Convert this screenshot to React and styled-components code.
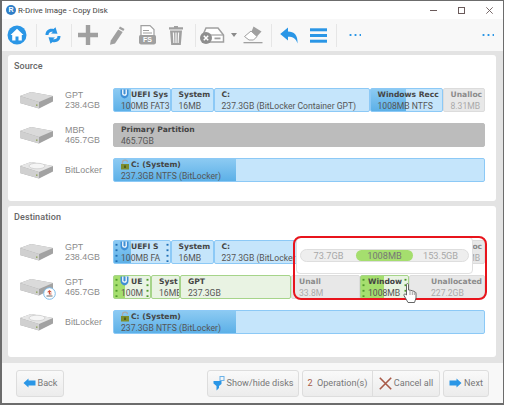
import React from "react";
import styled, { createGlobalStyle } from "styled-components";

const GlobalStyle = createGlobalStyle`
  html, body {
    margin: 0;
    padding: 0;
    background: #fff;
    font-family: Roboto, "Liberation Sans", sans-serif;
  }
`;

const BLUE = "#2a96e6";
const GREY = "#a0a0a0";

// icons
const HomeIcon = () => (
  <svg width="20" height="20" viewBox="0 0 20 20">
    <circle cx="10" cy="10" r="9.500" fill={BLUE} />
    <path d="M10 3.800 L16.500 10 H14.800 V15.500 H11.500 V11.500 H8.500 V15.500 H5.200 V10 H3.500 Z" fill="#fff" />
  </svg>
);

const RefreshIcon = () => (
  <svg width="16" height="17" viewBox="0 0 16 17" fill={BLUE}>
    <path d="M0.500 8 C0.500 3.500 4 1 8.500 2 L10.500 0.200 L12.500 6.800 L6 6.500 L8 4.800 C5.500 4.200 3.500 5.500 3.500 8 Z" />
    <path d="M15.500 9 C15.500 13.500 12 16 7.500 15 L5.500 16.800 L3.500 10.200 L10 10.500 L8 12.200 C10.500 12.800 12.500 11.500 12.500 9 Z" />
  </svg>
);

const PlusIcon = () => (
  <svg width="20" height="20" viewBox="0 0 20 20">
    <path d="M7.800 0 H12.200 V7.800 H20 V12.200 H12.200 V20 H7.800 V12.200 H0 V7.800 H7.800 Z" fill={GREY} />
  </svg>
);

const PencilIcon = () => (
  <svg width="16" height="19" viewBox="0 0 16 19" fill={GREY}>
    <path d="M11 0.500 L15.500 3 L14.300 5 L9.800 2.500 Z" />
    <path d="M9.200 3.500 L13.700 6 L6 17.500 L1 18.800 L1.800 14.500 Z" />
  </svg>
);

const DocIcon = () => (
  <svg width="17" height="20" viewBox="0 0 17 20">
    <path d="M2 0.600 H11 L15 4.500 V19 H2 Z" fill="#fff" stroke={GREY} strokeWidth="1.200" />
    <path d="M4 5.500 H10 M4 8 H13" stroke={GREY} strokeWidth="1.100" />
    <rect x="0" y="10" width="17" height="9" rx="1.500" fill={GREY} />
    <text x="8.500" y="17" fontSize="7" fontWeight="700" fill="#fff" textAnchor="middle" fontFamily="Liberation Sans">FS</text>
  </svg>
);

const TrashIcon = () => (
  <svg width="14" height="19" viewBox="0 0 14 19" fill={GREY}>
    <path d="M5 0 H9 V1.200 H14 V3.500 H0 V1.200 H5 Z" />
    <path d="M1 4.500 H13 L11.800 19 H2.200 Z M3.800 6.500 L4.300 17 H5.400 L5.100 6.500 Z M6.400 6.500 V17 H7.600 V6.500 Z M8.900 6.500 L8.600 17 H9.700 L10.200 6.500 Z" fillRule="evenodd" />
  </svg>
);

const DiskRemoveIcon = () => (
  <svg width="25" height="17" viewBox="0 0 25 17">
    <path d="M6 1 H18 L23.500 8 V15 H3 V8 Z" fill="#fff" stroke={GREY} strokeWidth="1.500" />
    <path d="M3 8 H23" stroke={GREY} strokeWidth="1.200" />
    <rect x="14.500" y="10.500" width="6" height="1.800" fill={GREY} />
    <circle cx="6" cy="11" r="6" fill="#8e8e8e" />
    <path d="M3.800 8.800 L8.200 13.200 M8.200 8.800 L3.800 13.200" stroke="#fff" strokeWidth="1.500" />
  </svg>
);

const EraserIcon = () => (
  <svg width="20" height="18" viewBox="0 0 20 18">
    <path d="M10.500 0.500 L18.500 5.500 L12.500 12 L8 7 Z" fill={GREY} />
    <path d="M8 5 L14 10.500 L10.500 14 H6 L1.500 10.500 Z" fill="#fff" stroke={GREY} />
    <rect x="0.500" y="16" width="19" height="1.300" fill={GREY} />
  </svg>
);

const UndoIcon = () => (
  <svg width="18" height="17" viewBox="0 0 18 17">
    <path d="M8 0.500 V4.500 C14 4.500 18 8 17.500 16.500 C16 11.500 13 9.800 8 9.800 V13.500 L0.200 7 Z" fill={BLUE} />
  </svg>
);

const MenuIcon = () => (
  <svg width="17" height="15" viewBox="0 0 17 15" fill={BLUE}>
    <rect y="0.300" width="17" height="3" />
    <rect y="6" width="17" height="3" />
    <rect y="11.700" width="17" height="3" />
  </svg>
);

const DiskIcon = ({ lined }) => (
  <svg width="36" height="22" viewBox="0 0 36 22">
    <path d="M1 7 L12 3 L34 7 V12.500 L20 19.500 L1 14 Z" fill="#a2a2a2" />
    <path d="M1 7 L12 3 L34 7 L20 13 Z" fill={lined ? "#e6e6e6" : "#dadada"} />
    <path d="M1 7 L20 13 V19.500 L1 14 Z" fill="#d0d0d0" />
    {lined && <ellipse cx="18" cy="7" rx="8" ry="2.800" fill="#f5f5f5" stroke="#c4c4c4" strokeWidth="0.600" />}
    <rect x="17" y="15.500" width="1.500" height="1.300" fill="#8aa050" />
  </svg>
);

const RestoreBadge = () => (
  <svg width="13" height="13" viewBox="0 0 13 13">
    <circle cx="6.500" cy="6.500" r="5.800" fill="#fff" stroke="#7dbbe8" strokeWidth="1" />
    <path d="M3.500 9 H9.500" stroke="#666" strokeWidth="1" />
    <path d="M6.500 3 L4 5.200 H5.800 V7.500 H8.500 V6.500 H7 V5.200 H9 Z" fill="#d2533a" />
  </svg>
);

const ShieldIcon = () => (
  <svg width="9" height="10" viewBox="0 0 9 10">
    <path d="M0.500 0.500 H8.500 V5 C8.500 7.500 6.500 9 4.500 9.500 C2.500 9 0.500 7.500 0.500 5 Z" fill="#3f8fd6" />
    <path d="M2.800 0.500 V5 C2.800 6.500 6.200 6.500 6.200 5 V0.500" fill="none" stroke="#fff" strokeWidth="1.300" />
  </svg>
);

const LockIcon = () => (
  <svg width="10" height="11" viewBox="0 0 10 11">
    <path d="M2.500 5 V3.200 C2.500 0.400 7.500 0.400 7.500 3.200" fill="none" stroke="#a9a9a9" strokeWidth="1.300" />
    <rect x="1" y="5" width="8" height="5.500" fill="#7d8d2e" />
    <rect x="4.300" y="6.500" width="1.400" height="2.500" fill="#3c4a12" />
  </svg>
);

const TagIcon = () => (
  <svg width="12" height="15" viewBox="0 0 12 15">
    <rect x="7" y="0.500" width="4" height="4" fill="none" stroke="#6bb2e8" />
    <path d="M0.500 5 H8.500 V8 L6 10 V12 L3.500 14.500 V10 L0.500 7.500 Z" fill={BLUE} />
  </svg>
);

const LeftArrow = () => (
  <svg width="13" height="10" viewBox="0 0 13 10">
    <path d="M0.500 5 L5.500 0.500 V2.600 H12.500 V7.400 H5.500 V9.500 Z" fill={BLUE} />
  </svg>
);

const RightArrow = () => (
  <svg width="13" height="10" viewBox="0 0 13 10">
    <path d="M12.500 5 L7.500 0.500 V2.600 H0.500 V7.400 H7.500 V9.500 Z" fill={BLUE} />
  </svg>
);

const CrossIcon = () => (
  <svg width="13" height="13" viewBox="0 0 13 13">
    <path d="M0.800 0.800 L12.200 12.200 M12.200 0.800 L0.800 12.200" stroke="#a85a48" strokeWidth="1.600" />
  </svg>
);

const HandCursor = () => (
  <svg width="14" height="21" viewBox="0 0 14 21">
    <path
      d="M3.500 1.500 C3.500 0.300 5.500 0.300 5.500 1.500 V7 L7.500 7.300 L9.500 7.800 L11.500 8.500 C12.500 9 13 9.500 13 11 V15 L11.500 19.500 H5 L1 12.500 C0.500 11 2 10.500 3.500 12 Z"
      fill="#fff"
      stroke="#555"
      strokeWidth="0.900"
    />
    <path d="M7 8 V12 M9.300 8.500 V12 M11.300 9 V12" stroke="#777" strokeWidth="0.700" />
  </svg>
);

// data
const sourceRows = [
  {
    name: "GPT",
    size: "238.4GB",
    parts: [
      { w: 57.5, title: "UEFI Sys", sub: "100MB FAT3", icon: "shield", fill: 30 },
      { w: 43, title: "System", sub: "16MB" },
      { w: 156, title: "C:", sub: "237.3GB (BitLocker Container GPT)" },
      { w: 73, title: "Windows Recc", sub: "1008MB NTFS", fill: 50 },
      { w: 42, title: "Unalloc", sub: "8.31MB", kind: "free" },
    ],
  },
  {
    name: "MBR",
    size: "465.7GB",
    parts: [{ w: 371.5, title: "Primary Partition", sub: "465.7GB", kind: "plain" }],
  },
  {
    name: "BitLocker",
    lined: true,
    parts: [{ w: 371.5, title: "C: (System)", sub: "237.3GB NTFS (BitLocker)", icon: "lock", fill: 33 }],
  },
];

const destRows = [
  {
    name: "GPT",
    size: "238.4GB",
    parts: [
      { w: 57.5, title: "UEFI S", sub: "100MB FA", icon: "shield", fill: 30, handles: "blue" },
      { w: 43, title: "System", sub: "16MB" },
      { w: 156, title: "C:", sub: "237.3GB (BitLocker Container GPT)" },
      { w: 73, title: "Windows Recc", sub: "1008MB NTFS", fill: 50 },
      { w: 42, title: "Unalloc", sub: "8.31MB", kind: "free" },
    ],
  },
  {
    name: "GPT",
    size: "465.7GB",
    badge: true,
    parts: [
      { w: 38, title: "UE", sub: "100M", icon: "shield", fill: 30, kind: "green", handles: "green" },
      { w: 29, title: "Syst", sub: "16MB", kind: "green" },
      { w: 111, title: "GPT", sub: "237.3GB", kind: "green" },
      { w: 69, title: "Unall", sub: "33.8M", kind: "free" },
      { w: 49, title: "Window", sub: "1008MB", kind: "green", fill: 50, handles: "green" },
      { w: 75.5, title: "Unallocated", sub: "227.2GB", kind: "free", pad: 21 },
    ],
  },
  {
    name: "BitLocker",
    lined: true,
    parts: [{ w: 371.5, title: "C: (System)", sub: "237.3GB NTFS (BitLocker)", icon: "lock", fill: 33 }],
  },
];

const Partition = ({ p }) => (
  <Part $w={p.w} $kind={p.kind} $fill={p.fill} $pad={p.pad}>
    {p.handles && <Handle $side="left" $c={p.handles} />}
    {p.handles && <Handle $side="right" $c={p.handles} />}
    <PartTitle $kind={p.kind} $hasIcon={!!p.icon}>
      {p.icon === "shield" && <IconSpot><ShieldIcon /></IconSpot>}
      {p.icon === "lock" && <IconSpot><LockIcon /></IconSpot>}
      {p.title}
    </PartTitle>
    <PartSub $kind={p.kind}>{p.sub}</PartSub>
  </Part>
);

const DiskRow = ({ row }) => (
  <Row>
    <DiskSlot>
      <DiskIcon lined={row.lined} />
      {row.badge && (
        <BadgeSpot>
          <RestoreBadge />
        </BadgeSpot>
      )}
    </DiskSlot>
    <DiskInfo>
      <div>{row.name}</div>
      {row.size && <div>{row.size}</div>}
    </DiskInfo>
    <Bar>
      {row.parts.map((p, i) => (
        <Partition key={i} p={p} />
      ))}
    </Bar>
  </Row>
);

const App = () => {
  return (
    <>
      <GlobalStyle />
      <Window>
        <TitleBar>
          <AppLogo>R</AppLogo>
          <TitleText>R-Drive Image - Copy Disk</TitleText>
          <WinButtons>
            <WinButton>
              <svg width="7" height="7" viewBox="0 0 7 7">
                <path d="M0 3.500 H7" stroke="#6a5a5a" strokeWidth="1" />
              </svg>
            </WinButton>
            <WinButton>
              <svg width="7" height="7" viewBox="0 0 7 7">
                <rect x="0.500" y="0.500" width="6" height="6" fill="none" stroke="#6a5a5a" />
              </svg>
            </WinButton>
            <WinButton>
              <svg width="7" height="7" viewBox="0 0 7 7">
                <path d="M0.300 0.300 L6.700 6.700 M6.700 0.300 L0.300 6.700" stroke="#6a5a5a" strokeWidth="0.900" />
              </svg>
            </WinButton>
          </WinButtons>
        </TitleBar>
        <ToolbarWrap>
          <ToolbarRow>
            <ToolSlot $w={24} $after={7}><HomeIcon /></ToolSlot>
            <ToolSep />
            <ToolSlot $w={32} $after={2}><RefreshIcon /></ToolSlot>
            <ToolSep />
            <ToolSlot $w={32}><PlusIcon /></ToolSlot>
            <ToolSlot $w={26}><PencilIcon /></ToolSlot>
            <ToolSlot $w={34}><DocIcon /></ToolSlot>
            <ToolSlot $w={24} $after={7}><TrashIcon /></ToolSlot>
            <ToolSep />
            <ToolSlot $w={32}><DiskRemoveIcon /></ToolSlot>
            <ToolSlot $w={12}><Caret /></ToolSlot>
            <ToolSlot $w={26} $after={5}><EraserIcon /></ToolSlot>
            <ToolSep />
            <ToolSlot $w={34}><UndoIcon /></ToolSlot>
            <ToolSlot $w={24} $after={6}><MenuIcon /></ToolSlot>
            <ToolSep />
            <ToolSlot $w={34}><Dots /></ToolSlot>
          </ToolbarRow>
          <Dots />
        </ToolbarWrap>
        <Main>
          <Panel $bottom={19} $top={33}>
            <PanelTitle>Source</PanelTitle>
            <Rows>
              {sourceRows.map((row, i) => (
                <DiskRow key={i} row={row} />
              ))}
            </Rows>
          </Panel>
          <Panel $bottom={23} $top={34}>
            <PanelTitle>Destination</PanelTitle>
            <Rows>
              {destRows.map((row, i) => (
                <DiskRow key={i} row={row} />
              ))}
            </Rows>
            <Highlight />
            <ResizePopup>
              <Slider>
                <SliderVal>73.7GB</SliderVal>
                <SliderThumb>1008MB</SliderThumb>
                <SliderVal>153.5GB</SliderVal>
              </Slider>
            </ResizePopup>
            <CursorSpot>
              <HandCursor />
            </CursorSpot>
          </Panel>
        </Main>
        <Footer>
          <FootButton $w={48}>
            <LeftArrow />
            Back
          </FootButton>
          <FootSpacer />
          <FootButton $w={92}>
            <TagIcon />
            Show/hide disks
          </FootButton>
          <FootGroup>
            <GroupCell $w={69}>
              <OpCount>2</OpCount>&nbsp;Operation(s)
            </GroupCell>
            <GroupCell $w={66} $divider>
              <CrossIcon />
              Cancel all
            </GroupCell>
          </FootGroup>
          <FootButton $w={46}>
            <RightArrow />
            Next
          </FootButton>
        </Footer>
      </Window>
    </>
  );
};

export default App;

// window frame
const Window = styled.div`
  width: 504px;
  height: 405px;
  box-sizing: border-box;
  border: 1px solid #6c6c6c;
  border-left-width: 2px;
  border-bottom-width: 2px;
  display: flex;
  flex-direction: column;
  background: #e3e3e3;
  overflow: hidden;
`;

const TitleBar = styled.div`
  height: 18px;
  flex: none;
  background: #fff;
  display: flex;
  align-items: center;
  padding-left: 4px;
`;

const AppLogo = styled.div`
  width: 10px;
  height: 10px;
  border-radius: 50%;
  background: #2f7fc8;
  color: #fff;
  font: 700 7px/10px "Liberation Sans", sans-serif;
  text-align: center;
`;

const TitleText = styled.div`
  margin-left: 2px;
  font-size: 7.9px;
  color: #444;
`;

const WinButtons = styled.div`
  margin-left: auto;
  display: flex;
`;

const WinButton = styled.div`
  width: 28px;
  height: 18px;
  display: flex;
  align-items: center;
  justify-content: center;
`;

// toolbar
const ToolbarWrap = styled.div`
  height: 32px;
  flex: none;
  background: #f8f8f8;
  display: flex;
  align-items: center;
  justify-content: space-between;
  padding: 0 9px 0 3px;
`;

const ToolbarRow = styled.div`
  display: flex;
  align-items: center;
  height: 100%;
`;

const ToolSlot = styled.div`
  width: ${(p) => p.$w}px;
  margin-right: ${(p) => p.$after || 0}px;
  display: flex;
  justify-content: center;
  align-items: center;
`;

const ToolSep = styled.div`
  width: 1px;
  height: 23px;
  background: #e6e6e6;
`;

const Caret = styled.div`
  width: 0;
  height: 0;
  border-left: 3px solid transparent;
  border-right: 3px solid transparent;
  border-top: 4px solid #8a8a8a;
`;

const Dots = styled.div`
  width: 13px;
  height: 2px;
  background: radial-gradient(circle, ${BLUE} 1px, transparent 1.2px) left center / 5px 2px repeat-x;
`;

// panels
const Main = styled.div`
  flex: 1;
  display: flex;
  flex-direction: column;
  gap: 5px;
  padding: 4px 7px 7px 6px;
  min-height: 0;
`;

const Panel = styled.div`
  position: relative;
  background: #fff;
  border-radius: 3px;
  padding-top: ${(p) => p.$top}px;
  padding-bottom: ${(p) => p.$bottom}px;
  height: fit-content;
`;

const PanelTitle = styled.div`
  position: absolute;
  left: 6px;
  top: 6px;
  font-size: 9px;
  font-weight: 500;
  color: #666;
  letter-spacing: 0.1px;
`;

const Rows = styled.div`
  display: flex;
  flex-direction: column;
  gap: 11px;
`;

const Row = styled.div`
  display: flex;
  align-items: center;
  height: 24px;
`;

const DiskSlot = styled.div`
  position: relative;
  width: 36px;
  margin-left: 11px;
  display: flex;
`;

const BadgeSpot = styled.div`
  position: absolute;
  right: -1px;
  bottom: -2px;
  line-height: 0;
`;

const DiskInfo = styled.div`
  width: 48px;
  margin-left: 10px;
  font: 8.9px/10.5px "Liberation Sans", sans-serif;
  color: #8a8a8a;
`;

const Bar = styled.div`
  display: flex;
  height: 24px;
`;

const partBorder = { free: "#dcdcdc", plain: "#bcbcbc", green: "#a6d48a" };
const partBg = { free: "#e8e8e8", plain: "#bcbcbc", green: "#e9f3e3" };

const Part = styled.div`
  position: relative;
  width: ${(p) => p.$w}px;
  height: 24px;
  box-sizing: border-box;
  padding: 0 1px 0 ${(p) => p.$pad || 7}px;
  overflow: hidden;
  white-space: nowrap;
  border: 1px solid ${(p) => partBorder[p.$kind] || "#8cc9f6"};
  border-radius: 2px;
  background: ${(p) => {
    const base = partBg[p.$kind] || "#c5e5fb";
    if (!p.$fill) return base;
    const fill = p.$kind === "green" ? "linear-gradient(#a5de6e,#a5de6e)" : "linear-gradient(#8ccaf2,#5cb0e7)";
    return `linear-gradient(to right, transparent ${p.$fill}%, ${base} ${p.$fill}%), ${fill}`;
  }};
`;

const PartTitle = styled.div`
  font: 700 7.6px/12px "DejaVu Sans", sans-serif;
  margin-left: ${(p) => (p.$hasIcon ? "10px" : "0")};
  color: ${(p) => (p.$kind === "free" ? "#8c8c8c" : "#444")};
  position: relative;
`;

const IconSpot = styled.span`
  position: absolute;
  left: -11px;
  top: 0;
  line-height: 0;
`;

const PartSub = styled.div`
  font: 8.6px/11px Roboto, sans-serif;
  color: ${(p) => (p.$kind === "free" ? "#aaa" : "#555")};
`;

const Handle = styled.div`
  position: absolute;
  top: 1px;
  bottom: 1px;
  ${(p) => p.$side}: 1px;
  width: 3px;
  background: radial-gradient(circle, ${(p) => (p.$c === "green" ? "#4f9a2c" : "#1f6fb5")} 1px, transparent 1.2px) center top / 3px 5.5px repeat-y;
`;

// resize overlay
const Highlight = styled.div`
  position: absolute;
  left: 285px;
  top: 30px;
  width: 194px;
  height: 64px;
  box-sizing: border-box;
  border: 2px solid #e8141c;
  border-radius: 8px;
  z-index: 2;
`;

const ResizePopup = styled.div`
  position: absolute;
  left: 288px;
  top: 31px;
  width: 177px;
  height: 37px;
  box-sizing: border-box;
  background: #fff;
  border: 1px solid #e0e0e0;
  border-radius: 4px;
  padding: 11px 3px 0;
  z-index: 1;
`;

const Slider = styled.div`
  height: 13px;
  box-sizing: border-box;
  background: #eeeeee;
  border: 1px solid #dedede;
  border-radius: 7px;
  display: grid;
  grid-template-columns: 55px 57px 1fr;
  align-items: center;
  text-align: center;
`;

const SliderVal = styled.span`
  font: 9.2px Roboto, sans-serif;
  color: #a8a8a8;
`;

const SliderThumb = styled.span`
  height: 11px;
  border-radius: 6px;
  background: #a5de6e;
  font: 9.2px/11px Roboto, sans-serif;
  color: #777;
`;

const CursorSpot = styled.div`
  position: absolute;
  left: 395px;
  top: 77px;
  z-index: 3;
  line-height: 0;
`;

// footer
const Footer = styled.div`
  height: 40px;
  flex: none;
  background: #f8f8f8;
  display: flex;
  align-items: center;
  gap: 3px;
  padding: 0 14px;
  font: 9.1px Roboto, sans-serif;
  color: #777;
`;

const FootSpacer = styled.div`
  flex: 1;
`;

const FootButton = styled.div`
  width: ${(p) => p.$w}px;
  height: 27px;
  box-sizing: border-box;
  display: flex;
  align-items: center;
  justify-content: center;
  gap: 2px;
  border: 1px solid #dddddd;
  border-radius: 3px;
  background: linear-gradient(#f9f9f9, #ececec);
  white-space: nowrap;
`;

const FootGroup = styled.div`
  display: flex;
  height: 27px;
  box-sizing: border-box;
  border: 1px solid #dddddd;
  border-radius: 3px;
  background: linear-gradient(#f9f9f9, #ececec);
`;

const GroupCell = styled.div`
  width: ${(p) => p.$w}px;
  display: flex;
  align-items: center;
  justify-content: center;
  gap: 2px;
  white-space: nowrap;
  ${(p) => p.$divider && "border-left: 1px solid #dddddd;"}
`;

const OpCount = styled.span`
  color: #a85a48;
`;
